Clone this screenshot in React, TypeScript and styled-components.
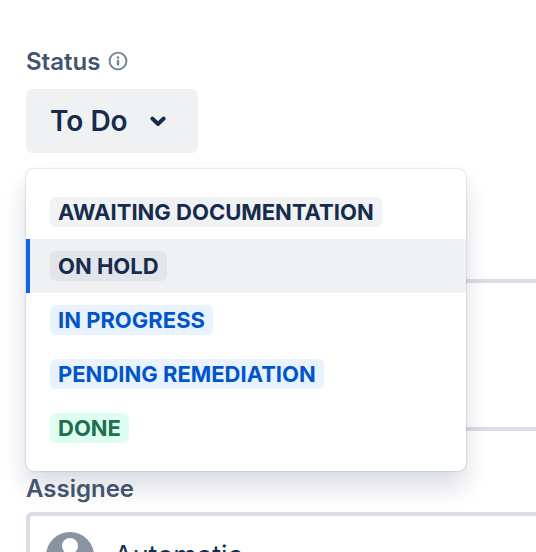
import React from "react";
import styled, { createGlobalStyle, css } from "styled-components";

const GlobalStyle = createGlobalStyle`
  *, *::before, *::after { box-sizing: border-box; }
  html, body { margin: 0; background: #ffffff; }
  body { height: 100vh; overflow: hidden; }
  body, button, textarea { font-family: Inter, "Liberation Sans", sans-serif; }
`;

const Form = styled.main`
  display: flex;
  flex-direction: column;
  padding: 46px 0 0 26px;
`;

const Field = styled.section`
  display: flex;
  flex-direction: column;
  align-items: flex-start;
`;

const LabelRow = styled.div`
  display: flex;
  align-items: center;
  gap: 8px;
  height: 32px;
`;

const Label = styled.label`
  color: #44546f;
  font-size: 24px;
  font-weight: 600;
  line-height: 32px;
`;

const InfoButton = styled.button`
  display: flex;
  padding: 0 0 2px;
  border: 0;
  background: none;
  color: #738096;
`;

const Dropdown = styled.div`
  position: relative;
  align-self: stretch;
  margin-top: 11px;
`;

const StatusButton = styled.button`
  display: flex;
  align-items: center;
  gap: 22px;
  height: 64px;
  padding: 0 30px 0 24px;
  border: 0;
  border-radius: 6px;
  background: #f0f1f3;
  color: #172b4d;
  font-size: 28px;
  font-weight: 600;
  line-height: 40px;
`;

const Menu = styled.ul`
  position: absolute;
  z-index: 1;
  top: calc(100% + 16px);
  left: 0;
  width: 440px;
  margin: 0;
  padding: 16px 0;
  list-style: none;
  border-radius: 8px;
  background: #ffffff;
  box-shadow: 0 16px 24px rgba(9, 30, 66, 0.15), 0 0 2px rgba(9, 30, 66, 0.31);
`;

const Option = styled.button<{ $active?: boolean }>`
  display: flex;
  align-items: center;
  width: 100%;
  height: 54px;
  padding: 0 24px 0 20px;
  border: 0;
  border-left: 4px solid ${(p) => (p.$active ? "#0c66e4" : "transparent")};
  background: ${(p) => (p.$active ? "#f0f1f3" : "transparent")};
  text-align: left;
`;

type Tone = "neutral" | "selected" | "progress" | "success";

const tones = {
  neutral: css`background: #f1f2f4; color: #172b4d;`,
  selected: css`background: #e2e6ea; color: #172b4d;`,
  progress: css`background: #e9f2ff; color: #0055cc;`,
  success: css`background: #dcfff1; color: #216e4e;`,
};

const Lozenge = styled.span<{ $tone: Tone }>`
  padding: 0 8px;
  border-radius: 6px;
  font-size: 22px;
  font-weight: 700;
  line-height: 30px;
  white-space: nowrap;
  text-transform: uppercase;
  ${(p) => tones[p.$tone]}
`;

const NotesField = styled(Field)`
  margin-top: 126px;
`;

const TextArea = styled.textarea`
  display: block;
  align-self: stretch;
  height: 152px;
  border: 4px solid #dcdce4;
  border-right: 0;
  border-radius: 6px 0 0 6px;
  background: #ffffff;
  resize: none;
`;

const AssigneeField = styled(Field)`
  margin-top: 42px;
`;

const AssigneeButton = styled.button`
  position: relative;
  z-index: 2;
  display: flex;
  align-items: center;
  gap: 20px;
  align-self: stretch;
  height: 88px;
  margin-top: 7px;
  padding: 0 16px;
  border: 4px solid #dcdce4;
  border-right: 0;
  border-radius: 6px 0 0 6px;
  background: #ffffff;
  color: #172b4d;
  font-size: 27px;
  font-weight: 400;
  line-height: 32px;
`;

const AssigneeLabel = styled(Label)`
  position: relative;
  z-index: 2;
`;

const statuses: { name: string; tone: Tone; active?: boolean }[] = [
  { name: "Awaiting Documentation", tone: "neutral" },
  { name: "On Hold", tone: "selected", active: true },
  { name: "In Progress", tone: "progress" },
  { name: "Pending Remediation", tone: "progress" },
  { name: "Done", tone: "success" },
];

const InfoIcon = () => (
  <svg width="20" height="20" viewBox="0 0 20 20" fill="none" aria-hidden="true">
    <circle cx="10" cy="10" r="8.4" stroke="currentColor" strokeWidth="1.9" />
    <circle cx="10" cy="6.5" r="1.3" fill="currentColor" />
    <path d="M10 10v3.4" stroke="currentColor" strokeWidth="2.4" strokeLinecap="round" />
  </svg>
);

const Chevron = () => (
  <svg width="18" height="12" viewBox="0 0 18 12" fill="none" aria-hidden="true">
    <path d="M2.4 3.6 8 9l5.6-5.4" stroke="currentColor" strokeWidth="4" strokeLinecap="round" strokeLinejoin="round" />
  </svg>
);

const Avatar = () => (
  <svg width="48" height="48" viewBox="0 0 48 48" aria-hidden="true">
    <circle cx="24" cy="24" r="24" fill="#8993a2" />
    <circle cx="24" cy="14" r="8" fill="#ffffff" />
    <path d="M10 36v-6a6 6 0 0 1 6-6h16a6 6 0 0 1 6 6v6a18 18 0 0 1-28 0Z" fill="#ffffff" />
  </svg>
);

export default function App() {
  return (
    <>
      <GlobalStyle />
      <Form>
        <Field>
          <LabelRow>
            <Label htmlFor="status">Status</Label>
            <InfoButton type="button" aria-label="About status">
              <InfoIcon />
            </InfoButton>
          </LabelRow>
          <Dropdown>
            <StatusButton id="status" type="button" aria-expanded="true">
              To Do
              <Chevron />
            </StatusButton>
            <Menu>
              {statuses.map((s) => (
                <li key={s.name}>
                  <Option type="button" $active={s.active}>
                    <Lozenge $tone={s.tone}>{s.name}</Lozenge>
                  </Option>
                </li>
              ))}
            </Menu>
          </Dropdown>
        </Field>
        <NotesField>
          <TextArea aria-label="Details" />
        </NotesField>
        <AssigneeField>
          <AssigneeLabel htmlFor="assignee">Assignee</AssigneeLabel>
          <AssigneeButton id="assignee" type="button">
            <Avatar />
            Automatic
          </AssigneeButton>
        </AssigneeField>
      </Form>
    </>
  );
}
